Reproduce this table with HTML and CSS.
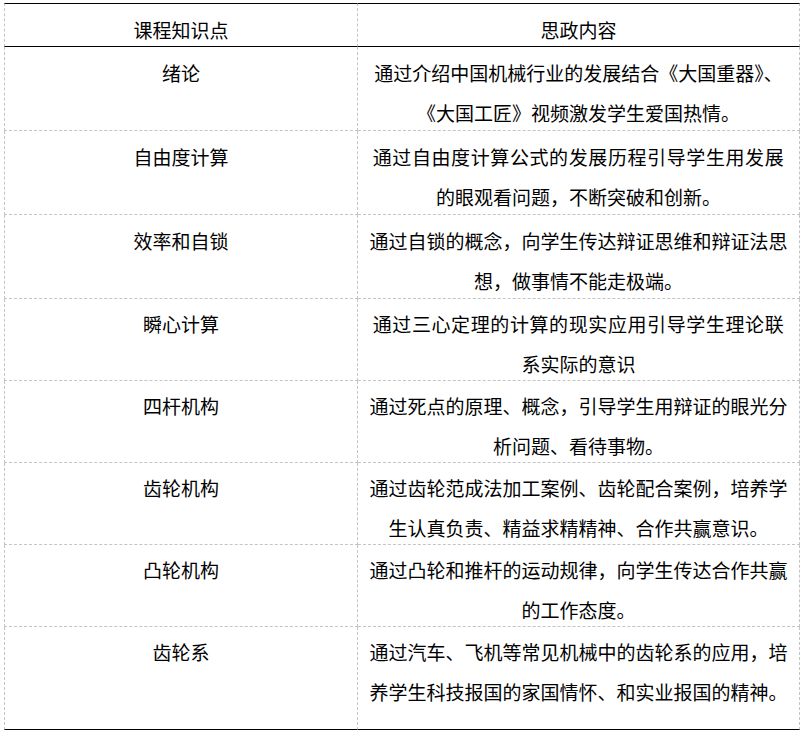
FILE: index.html
```html
<!DOCTYPE html>
<html lang="zh-CN">
<head>
<meta charset="utf-8">
<title>课程思政</title>
<link rel="stylesheet" href="styles.css">
</head>
<body>
<table class="sz-table">
  <thead>
    <tr class="row-head">
      <th class="c-left"><div class="txt">课程知识点</div></th>
      <th class="c-right"><div class="txt">思政内容</div></th>
    </tr>
  </thead>
  <tbody>
    <tr class="row-a">
      <td class="c-left"><div class="txt">绪论</div></td>
      <td class="c-right"><div class="txt">通过介绍中国机械行业的发展结合《大国重器》、<br>《大国工匠》视频激发学生爱国热情。</div></td>
    </tr>
    <tr class="row-a">
      <td class="c-left"><div class="txt">自由度计算</div></td>
      <td class="c-right"><div class="txt"><span class="wide">通过自由度计算公式的发展历程引导学生用发展</span><br>的眼观看问题，不断突破和创新。</div></td>
    </tr>
    <tr class="row-a">
      <td class="c-left"><div class="txt">效率和自锁</div></td>
      <td class="c-right"><div class="txt">通过自锁的概念，向学生传达辩证思维和辩证法思<br>想，做事情不能走极端。</div></td>
    </tr>
    <tr class="row-b">
      <td class="c-left"><div class="txt">瞬心计算</div></td>
      <td class="c-right"><div class="txt"><span class="wide">通过三心定理的计算的现实应用引导学生理论联</span><br>系实际的意识</div></td>
    </tr>
    <tr class="row-b">
      <td class="c-left"><div class="txt">四杆机构</div></td>
      <td class="c-right"><div class="txt">通过死点的原理、概念，引导学生用辩证的眼光分<br>析问题、看待事物。</div></td>
    </tr>
    <tr class="row-b">
      <td class="c-left"><div class="txt">齿轮机构</div></td>
      <td class="c-right"><div class="txt">通过齿轮范成法加工案例、齿轮配合案例，培养学<br>生认真负责、精益求精精神、合作共赢意识。</div></td>
    </tr>
    <tr class="row-b">
      <td class="c-left"><div class="txt">凸轮机构</div></td>
      <td class="c-right"><div class="txt">通过凸轮和推杆的运动规律，向学生传达合作共赢<br>的工作态度。</div></td>
    </tr>
    <tr class="row-c">
      <td class="c-left"><div class="txt">齿轮系</div></td>
      <td class="c-right"><div class="txt">通过汽车、飞机等常见机械中的齿轮系的应用，培<br>养学生科技报国的家国情怀、和实业报国的精神。</div></td>
    </tr>
  </tbody>
</table>
</body>
</html>
```

FILE: styles.css
```css
html, body {
  margin: 0;
  padding: 0;
  background: #ffffff;
}

body {
  font-family: "Noto Sans CJK SC", "Noto Sans", sans-serif;
  font-size: 19px;
  color: #000000;
}

.sz-table {
  margin: 3px 0 0 4px;
  border-collapse: separate;
  border-spacing: 0;
  table-layout: fixed;
  width: 796px;
}

.sz-table th,
.sz-table td {
  box-sizing: border-box;
  font-weight: normal;
  text-align: center;
  vertical-align: top;
  line-height: 40px;
  padding: 5px 0 0 0;
  white-space: nowrap;
  border-bottom: 1px dashed #c4c4c4;
}

.txt {
  margin-bottom: -30px;
}

.c-left {
  width: 354px;
  border-left: 1px dashed #c4c4c4;
  border-right: 1px dashed #c4c4c4;
}

.c-right {
  width: 442px;
  border-right: 1px dashed #c4c4c4;
}

.sz-table .row-head th {
  height: 44px;
  padding-top: 6px;
  border-top: 1px solid #000000;
  border-bottom: 1px solid #000000;
}

.sz-table .row-a td {
  height: 84px;
  padding-top: 6px;
}

.sz-table .row-b td {
  height: 82px;
}

.sz-table .row-c td {
  height: 103px;
  border-bottom: 1px solid #000000;
}

.wide {
  letter-spacing: 0.6px;
}
```
